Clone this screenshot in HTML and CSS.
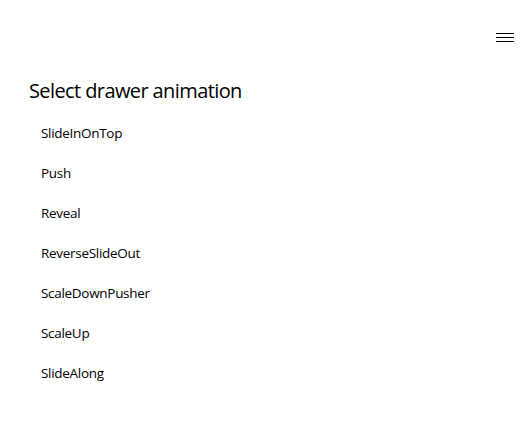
FILE: index.html
```html
<!DOCTYPE html>
<html>
<head>
<meta charset="utf-8">
<link rel="stylesheet" href="styles.css">
</head>
<body>
<header class="topbar">
  <button class="menu-btn" aria-label="Menu">
    <svg width="18" height="10" viewBox="0 0 18 10"><rect x="0" y="0" width="18" height="1" fill="#000"/><rect x="0" y="4" width="18" height="1" fill="#000"/><rect x="0" y="8" width="18" height="1" fill="#000"/></svg>
  </button>
</header>
<main class="content">
  <h1 class="title">Select drawer animation</h1>
  <ul class="options">
    <li class="option">SlideInOnTop</li>
    <li class="option">Push</li>
    <li class="option">Reveal</li>
    <li class="option">ReverseSlideOut</li>
    <li class="option">ScaleDownPusher</li>
    <li class="option">ScaleUp</li>
    <li class="option">SlideAlong</li>
  </ul>
</main>
</body>
</html>
```
FILE: styles.css
```css
html, body {
  margin: 0;
  padding: 0;
  background: #fff;
  color: #000;
  font-family: "Open Sans", "Noto Sans", sans-serif;
}
.topbar {
  height: 76px;
  display: flex;
  justify-content: flex-end;
  align-items: center;
  padding-right: 16px;
}
.menu-btn {
  border: 0;
  background: none;
  padding: 0;
  width: 18px;
  height: 10px;
  display: flex;
}
.content {
  padding-left: 29px;
}
.title {
  margin: 0;
  font-weight: 400;
  font-size: 20px;
  line-height: 30px;
  letter-spacing: -0.6px;
}
.options {
  list-style: none;
  margin: 7px 0 0;
  padding: 0 0 0 12px;
}
.option {
  height: 40px;
  line-height: 40px;
  font-size: 13.5px;
  letter-spacing: -0.3px;
}
```
